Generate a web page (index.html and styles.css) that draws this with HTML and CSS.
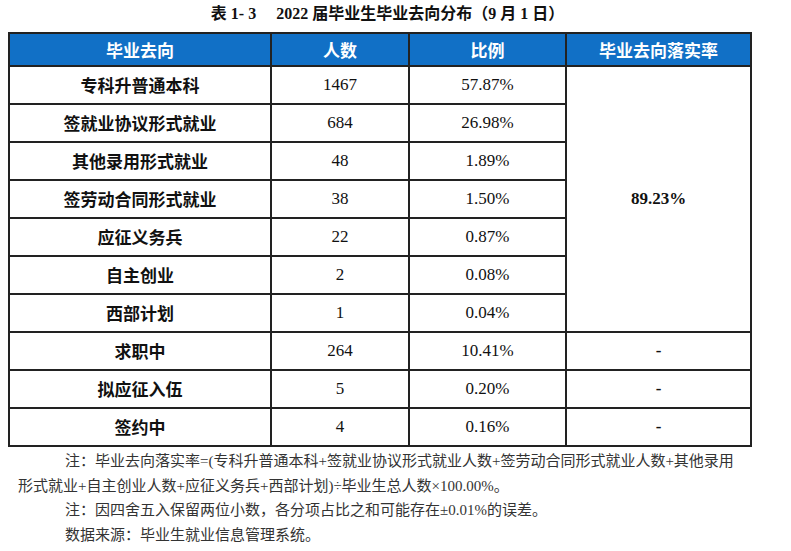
FILE: index.html
```html
<!DOCTYPE html>
<html lang="zh-CN">
<head>
<meta charset="utf-8">
<link rel="stylesheet" href="styles.css">
</head>
<body>
<div class="page">
  <h1 class="title">表 1- 3<span class="gap"></span>2022 届毕业生毕业去向分布（9 月 1 日）</h1>
  <table class="data">
    <colgroup>
      <col class="c1"><col class="c2"><col class="c3"><col class="c4">
    </colgroup>
    <thead>
      <tr><th>毕业去向</th><th>人数</th><th>比例</th><th>毕业去向落实率</th></tr>
    </thead>
    <tbody>
      <tr><td class="name">专科升普通本科</td><td>1467</td><td>57.87%</td><td class="rate" rowspan="7">89.23%</td></tr>
      <tr><td class="name">签就业协议形式就业</td><td>684</td><td>26.98%</td></tr>
      <tr><td class="name">其他录用形式就业</td><td>48</td><td>1.89%</td></tr>
      <tr><td class="name">签劳动合同形式就业</td><td>38</td><td>1.50%</td></tr>
      <tr><td class="name">应征义务兵</td><td>22</td><td>0.87%</td></tr>
      <tr><td class="name">自主创业</td><td>2</td><td>0.08%</td></tr>
      <tr><td class="name">西部计划</td><td>1</td><td>0.04%</td></tr>
      <tr><td class="name">求职中</td><td>264</td><td>10.41%</td><td class="dash">-</td></tr>
      <tr><td class="name">拟应征入伍</td><td>5</td><td>0.20%</td><td class="dash">-</td></tr>
      <tr><td class="name">签约中</td><td>4</td><td>0.16%</td><td class="dash">-</td></tr>
    </tbody>
  </table>
  <div class="notes">
    <p class="note">注：毕业去向落实率=(专科升普通本科+签就业协议形式就业人数+签劳动合同形式就业人数+其他录用形式就业+自主创业人数+应征义务兵+西部计划)÷毕业生总人数×100.00%。</p>
    <p class="note">注：因四舍五入保留两位小数，各分项占比之和可能存在±0.01%的误差。</p>
    <p class="note">数据来源：毕业生就业信息管理系统。</p>
  </div>
</div>
</body>
</html>
```
FILE: styles.css
```css
html, body {
  margin: 0;
  padding: 0;
  background: #ffffff;
}
body {
  font-family: "Liberation Serif", "Noto Sans CJK SC", serif;
  color: #000;
}
.page {
  padding: 0 8px;
}
.title {
  margin: 0;
  padding: 4px 16px 0 0;
  height: 28px;
  font-size: 16px;
  line-height: 20px;
  font-weight: bold;
  text-align: center;
  color: #111;
}
.gap {
  display: inline-block;
  width: 20px;
}
.data {
  border-collapse: collapse;
  table-layout: fixed;
  width: 742px;
  border: 2px solid #111;
}
.c1 { width: 262px; }
.c2 { width: 138px; }
.c3 { width: 157px; }
.c4 { width: 185px; }
.data th,
.data td {
  border: 2px solid #222;
  text-align: center;
  vertical-align: middle;
  padding: 0;
}
.data th {
  background: #1170c6;
  color: #fff;
  height: 31px;
  font-family: "Noto Sans CJK SC", sans-serif;
  font-size: 17px;
  font-weight: bold;
  line-height: 20px;
}
.data td {
  height: 36px;
  font-size: 17px;
  line-height: 20px;
  color: #111;
}
.data td.name {
  font-family: "Noto Sans CJK SC", sans-serif;
  font-weight: bold;
}
.data td.rate {
  font-weight: bold;
}
.data td.dash {
  font-weight: bold;
}
.notes {
  padding: 2px 38px 0 10px;
}
.note {
  margin: 0;
  font-size: 15px;
  line-height: 24.5px;
  text-indent: 47px;
  color: #333;
  font-family: "Liberation Serif", "Noto Sans CJK SC", serif;
}
```
